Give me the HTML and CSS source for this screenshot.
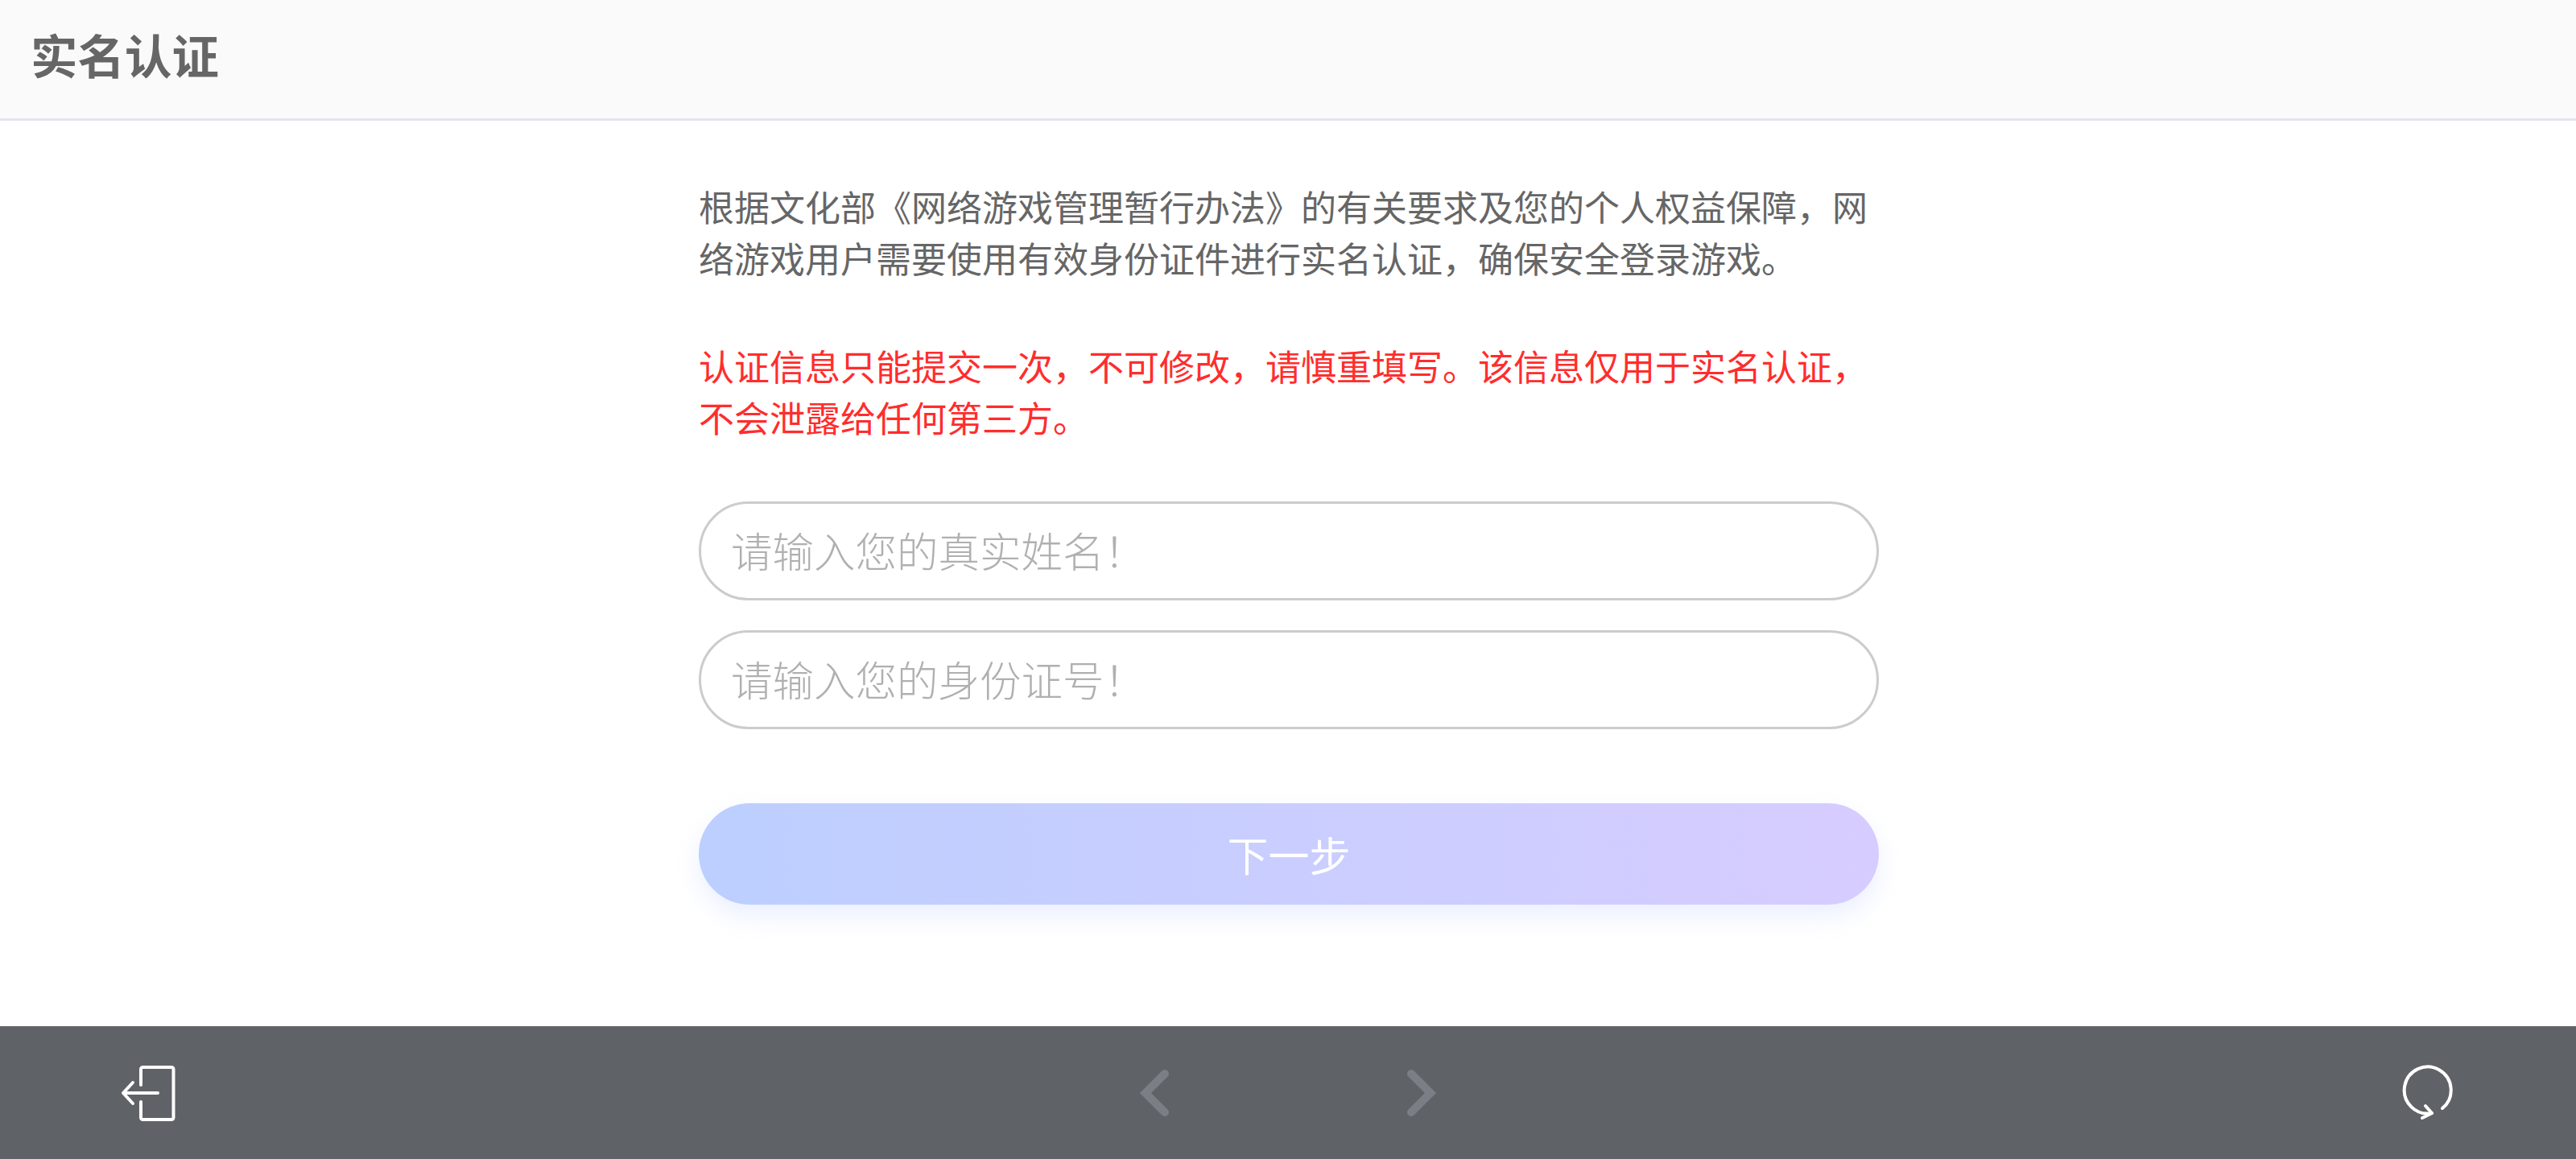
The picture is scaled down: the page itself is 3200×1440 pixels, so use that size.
FILE: index.html
```html
<!DOCTYPE html>
<html lang="zh-CN">
<head>
  <meta charset="UTF-8">
  <title>实名认证</title>
  <link rel="stylesheet" href="styles.css">
</head>
<body>
<div class="page">
  <div class="header">实名认证</div>
  <div class="main">
    <div class="form">
      <p class="tip">根据文化部《网络游戏管理暂行办法》的有关要求及您的个人权益保障，网络游戏用户需要使用有效身份证件进行实名认证，确保安全登录游戏。</p>
      <p class="tip red">认证信息只能提交一次，不可修改，请慎重填写。该信息仅用于实名认证，不会泄露给任何第三方。</p>
      <input class="field first" type="text" placeholder="请输入您的真实姓名！">
      <input class="field" type="text" placeholder="请输入您的身份证号！">
      <div class="next">下一步</div>
    </div>
  </div>
  <div class="footer">
    <svg class="icon" width="70" height="70" viewBox="0 0 70 70">
      <path d="M25 25V5.500a2.500 2.500 0 0 1 2.500-2.500H63a2.500 2.500 0 0 1 2.500 2.500V65.500a2.500 2.500 0 0 1-2.500 2.500H27.500a2.500 2.500 0 0 1-2.500-2.500V46"/>
      <path d="M46 35H4M15 22 3 35 15 48"/>
    </svg>
    <div class="arrows">
      <svg class="arrow" width="50" height="70" viewBox="0 0 50 70">
        <path d="M37 11 13 35 37 59"/>
      </svg>
      <svg class="arrow" width="50" height="70" viewBox="0 0 50 70">
        <path d="M13 11 37 35 13 59"/>
      </svg>
    </div>
    <svg class="icon" width="70" height="70" viewBox="0 0 70 70">
      <path d="M54 54A29 29 0 1 0 41 60"/>
      <path d="M33 51 41 60 29 66"/>
    </svg>
  </div>
</div>
</body>
</html>
```

FILE: styles.css
```css
* {
  padding: 0;
  margin: 0;
  box-sizing: border-box;
}

body {
  font-family: "Noto Sans CJK SC", "Liberation Sans", sans-serif;
  background-color: #fff;
}

.page {
  width: 3200px;
  height: 1440px;
  display: flex;
  flex-direction: column;
}

.header {
  height: 150px;
  padding-left: 38px;
  background-color: #fafafa;
  border-bottom: 3px solid #e3e4f0;
  color: #666;
  font-size: 58.5px;
  font-weight: 700;
  line-height: 134px;
}

.main {
  flex: 1;
  padding-left: 2px;
}

.form {
  width: 1466px;
  margin: 0 auto;
  padding-top: 74px;
}

.tip {
  font-size: 44px;
  line-height: 64px;
  color: #666;
  margin-bottom: 70px;
}

.red {
  color: #ff2d2d;
  margin-bottom: 73px;
}

.field {
  display: block;
  width: 100%;
  height: 123px;
  padding: 0 37px 5px;
  margin-top: 37px;
  border: 3px solid #ccc;
  border-radius: 62px;
  background: #fff;
  font-family: inherit;
  font-size: 51.500px;
  font-weight: 300;
  outline: none;
}

.first {
  margin-top: 0;
}

.field::placeholder {
  color: #b0b0b0;
}

.next {
  height: 126px;
  margin-top: 92px;
  border-radius: 63px;
  background: linear-gradient(90deg, #bccfff, #d7ccff);
  box-shadow: 0 14px 30px rgba(190, 205, 255, .3);
  color: #fff;
  font-size: 51px;
  line-height: 126px;
  text-align: center;
}

.footer {
  height: 165px;
  padding: 0 150px;
  background-color: #5f6267;
  display: flex;
  align-items: center;
  justify-content: space-between;
}

.icon path {
  fill: none;
  stroke: #fff;
  stroke-width: 4;
  stroke-linecap: round;
  stroke-linejoin: round;
}

.arrows {
  display: flex;
  gap: 280px;
}

.arrow path {
  fill: none;
  stroke: #7b7e85;
  stroke-width: 10;
  stroke-linecap: round;
}
```
